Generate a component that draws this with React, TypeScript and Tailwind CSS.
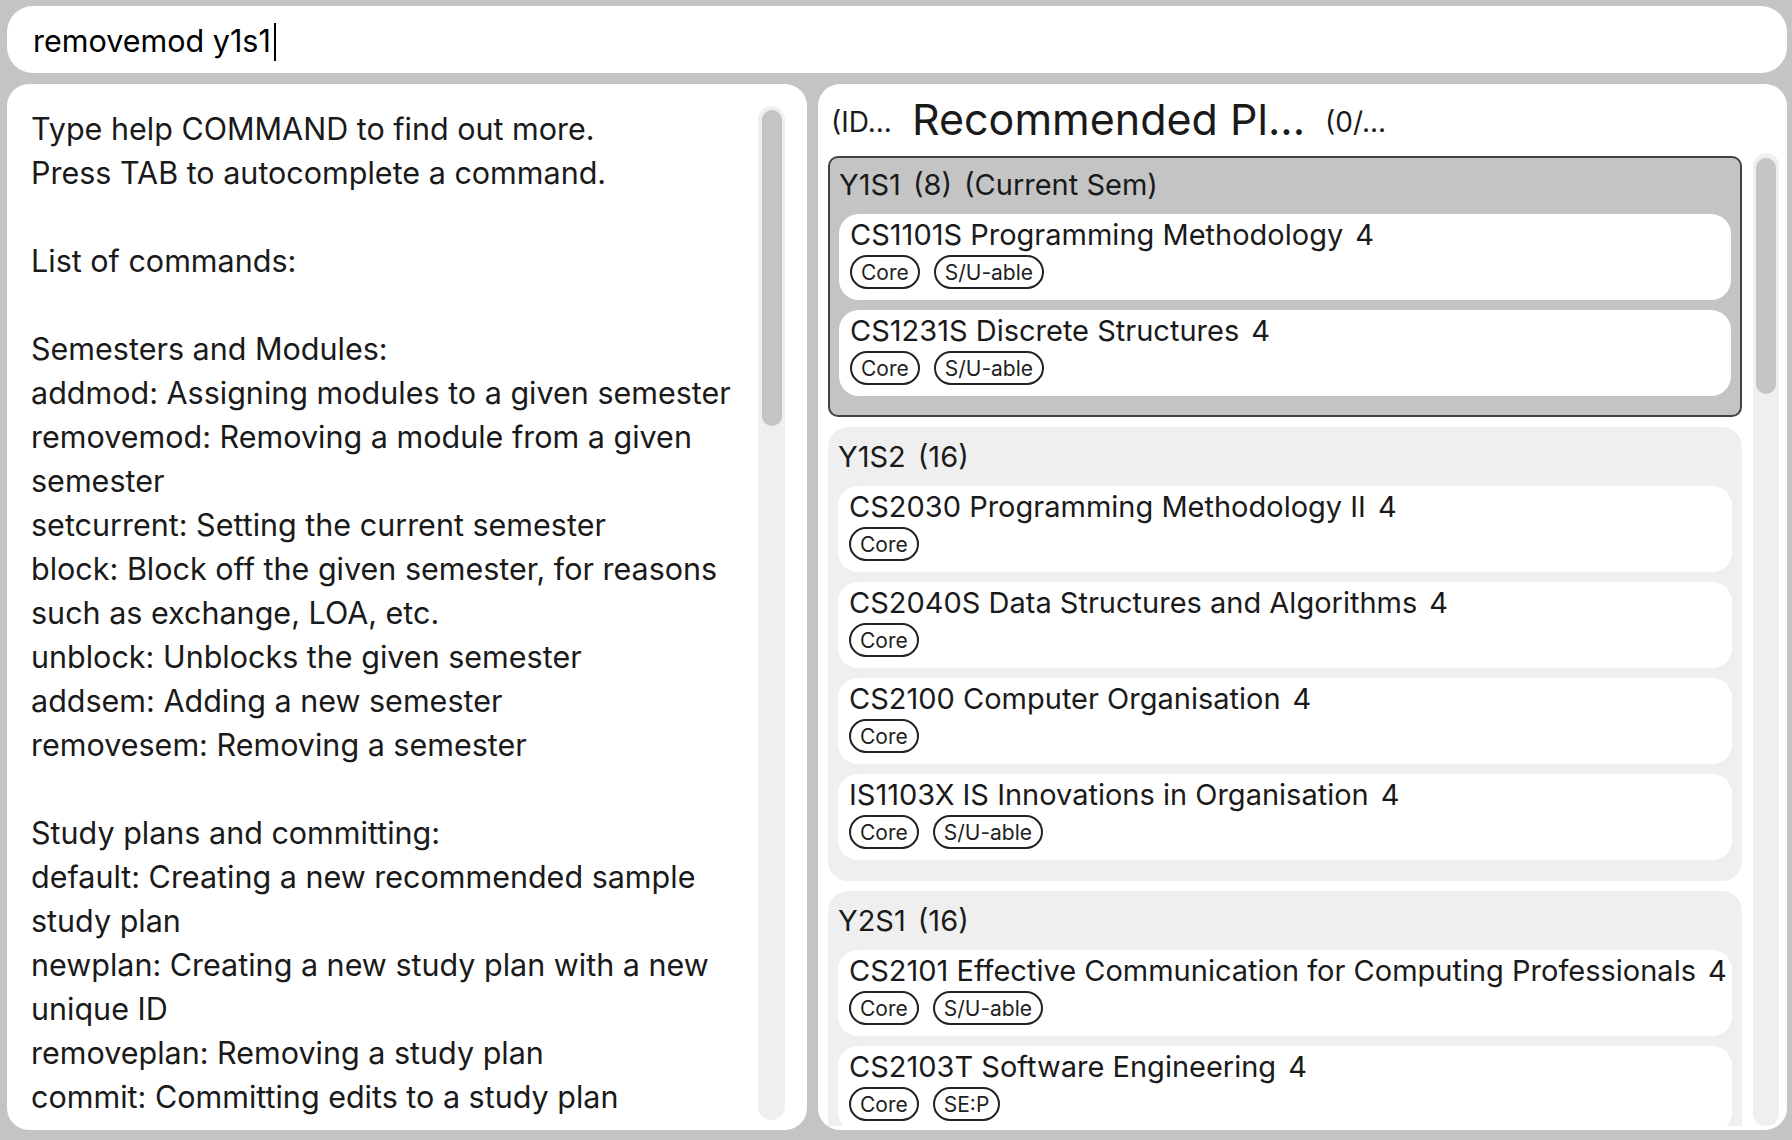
import React from 'react';

type Mod = { code: string; title: string; mc: number; tags: string[] };
type Sem = { name: string; mc: number; current?: boolean; mods: Mod[] };

const helpLines: string[] = [
  'Type help COMMAND to find out more.',
  'Press TAB to autocomplete a command.',
  '',
  'List of commands:',
  '',
  'Semesters and Modules:',
  'addmod: Assigning modules to a given semester',
  'removemod: Removing a module from a given',
  'semester',
  'setcurrent: Setting the current semester',
  'block: Block off the given semester, for reasons',
  'such as exchange, LOA, etc.',
  'unblock: Unblocks the given semester',
  'addsem: Adding a new semester',
  'removesem: Removing a semester',
  '',
  'Study plans and committing:',
  'default: Creating a new recommended sample',
  'study plan',
  'newplan: Creating a new study plan with a new',
  'unique ID',
  'removeplan: Removing a study plan',
  'commit: Committing edits to a study plan',
];

const sems: Sem[] = [
  {
    name: 'Y1S1',
    mc: 8,
    current: true,
    mods: [
      { code: 'CS1101S', title: 'Programming Methodology', mc: 4, tags: ['Core', 'S/U-able'] },
      { code: 'CS1231S', title: 'Discrete Structures', mc: 4, tags: ['Core', 'S/U-able'] },
    ],
  },
  {
    name: 'Y1S2',
    mc: 16,
    mods: [
      { code: 'CS2030', title: 'Programming Methodology II', mc: 4, tags: ['Core'] },
      { code: 'CS2040S', title: 'Data Structures and Algorithms', mc: 4, tags: ['Core'] },
      { code: 'CS2100', title: 'Computer Organisation', mc: 4, tags: ['Core'] },
      { code: 'IS1103X', title: 'IS Innovations in Organisation', mc: 4, tags: ['Core', 'S/U-able'] },
    ],
  },
  {
    name: 'Y2S1',
    mc: 16,
    mods: [
      { code: 'CS2101', title: 'Effective Communication for Computing Professionals', mc: 4, tags: ['Core', 'S/U-able'] },
      { code: 'CS2103T', title: 'Software Engineering', mc: 4, tags: ['Core', 'SE:P'] },
    ],
  },
];

const ModuleCard: React.FC<{ mod: Mod }> = ({ mod }) => (
  <div className="bg-white rounded-[20px] pl-[11px] pr-[10px] pt-[3px] pb-[11px]">
    <div className="flex gap-[12px] text-[29px] leading-[36px] text-[#1a1a1a] whitespace-nowrap">
      <span>
        {mod.code} {mod.title}
      </span>
      <span>{mod.mc}</span>
    </div>
    <div className="flex gap-[14px] mt-[2px]">
      {mod.tags.map((tag) => (
        <span
          key={tag}
          className="h-[34px] flex items-center px-[9px] border-2 border-[#222] rounded-full text-[21px] leading-none text-[#222]"
        >
          {tag}
        </span>
      ))}
    </div>
  </div>
);

const SemBox: React.FC<{ sem: Sem }> = ({ sem }) => (
  <div
    className={
      sem.current
        ? 'bg-[#c4c4c4] border-2 border-[#424242] rounded-[10px] pt-[8px] px-[9px] pb-[19px]'
        : 'bg-[#efefef] rounded-[20px] pt-[11px] px-[10px] pb-[21px]'
    }
  >
    <div className="flex gap-[12px] text-[29px] leading-[38px] text-[#1a1a1a] mb-[10px]">
      <span>{sem.name}</span>
      <span>({sem.mc})</span>
      {sem.current && <span>(Current Sem)</span>}
    </div>
    <div className="flex flex-col gap-[10px]">
      {sem.mods.map((m) => (
        <ModuleCard key={m.code} mod={m} />
      ))}
    </div>
  </div>
);

export default function App() {
  return (
    <div className="h-[1140px] w-full bg-[#c4c4c4] flex flex-col gap-[11px] pl-[7px] pr-[5px] pt-[6px] pb-[10px] font-[Inter,sans-serif] overflow-hidden">
      {/* command box */}
      <div className="h-[67px] shrink-0 bg-white rounded-[26px] flex items-center pl-[26px] pt-[4px]">
        <span className="text-[30.5px] text-black leading-none">removemod y1s1</span>
        <span className="w-[2px] h-[38px] bg-black ml-[3px]" />
      </div>

      <div className="flex-1 min-h-0 flex gap-[11px]">
        {/* result / help panel */}
        <div className="w-[800px] shrink-0 bg-white rounded-[22px] flex pl-[24px] pr-[22px] pt-[22px] pb-[10px]">
          <div className="flex-1 overflow-hidden pt-[1px] text-[30.5px] leading-[44px] text-[#1a1a1a]">
            {helpLines.map((l, i) => (
              <div key={i} className="whitespace-nowrap h-[44px]">
                {l}
              </div>
            ))}
          </div>
          <div className="w-[27px] shrink-0 rounded-full bg-[#efefef] pt-[4px] pl-[4px] pr-[3px]">
            <div className="h-[316px] rounded-full bg-[#c4c4c4]" />
          </div>
        </div>

        {/* study plan panel */}
        <div className="flex-1 min-w-0 bg-white rounded-[22px] flex flex-col">
          <div className="flex items-end gap-[20px] pl-[13px] pt-[9px] whitespace-nowrap text-[#1a1a1a]">
            <span className="text-[28px] leading-[34px] pb-[6px]">(ID...</span>
            <span className="text-[43px] leading-[52px]">Recommended Pl...</span>
            <span className="text-[28px] leading-[34px] pb-[6px]">(0/...</span>
          </div>
          <div className="flex-1 min-h-0 flex gap-[11px] mt-[8px] pl-[10px] pr-[8px] pb-[4px]">
            <div className="flex-1 min-w-0 overflow-hidden pt-[3px] flex flex-col gap-[10px]">
              {sems.map((s) => (
                <SemBox key={s.name} sem={s} />
              ))}
            </div>
            <div className="w-[26px] shrink-0 rounded-full bg-[#efefef] pt-[5px] px-[3px]">
              <div className="h-[236px] rounded-full bg-[#c4c4c4]" />
            </div>
          </div>
        </div>
      </div>
    </div>
  );
}
